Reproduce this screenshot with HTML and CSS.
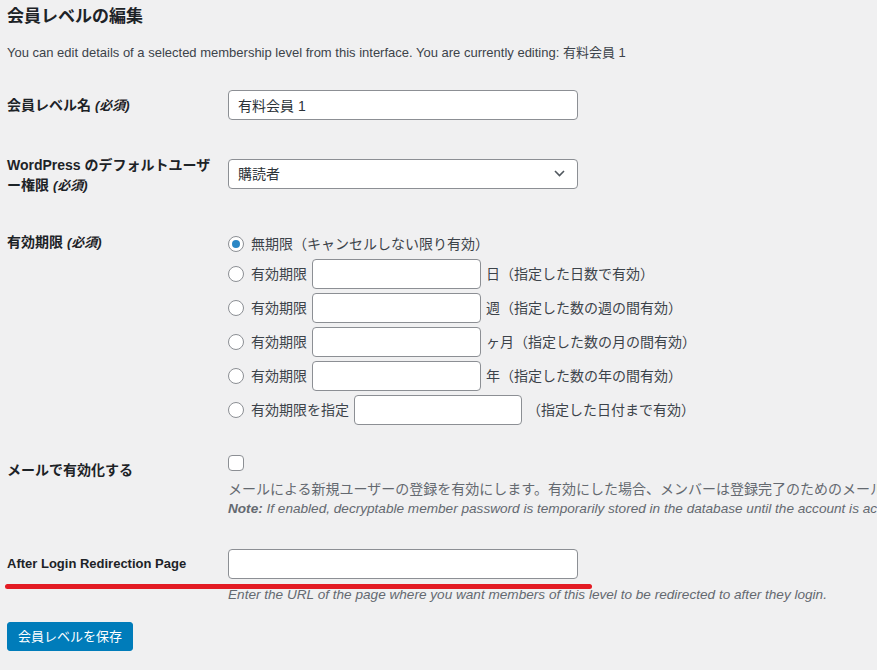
FILE: index.html
```html
<!DOCTYPE html>
<html lang="ja">
<head>
<meta charset="utf-8">
<title>会員レベルの編集</title>
<link rel="stylesheet" href="styles.css">
</head>
<body>
<div class="wrap">
  <h2 class="title">会員レベルの編集</h2>
  <p class="intro">You can edit details of a selected membership level from this interface. You are currently editing: 有料会員 1</p>

  <form class="form">
    <div class="th">会員レベル名 <em>(必須)</em></div>
    <div class="td"><input class="field" type="text" value="有料会員 1"></div>

    <div class="th">WordPress のデフォルトユーザー権限 <em>(必須)</em></div>
    <div class="td">
      <div class="field select">
        <span>購読者</span>
        <svg class="chevron" width="11" height="7" viewBox="0 0 11 7"><polyline points="1,1 5.5,5.5 10,1" fill="none" stroke="#50575e" stroke-width="1.6"/></svg>
      </div>
    </div>

    <div class="th">有効期限 <em>(必須)</em></div>
    <div class="td">
      <div class="choices">
        <div class="choice first"><span class="radio checked"></span>無期限（キャンセルしない限り有効）</div>
        <div class="choice"><span class="radio"></span>有効期限<input class="num" type="text">日（指定した日数で有効）</div>
        <div class="choice"><span class="radio"></span>有効期限<input class="num" type="text">週（指定した数の週の間有効）</div>
        <div class="choice"><span class="radio"></span>有効期限<input class="num" type="text">ヶ月（指定した数の月の間有効）</div>
        <div class="choice"><span class="radio"></span>有効期限<input class="num" type="text">年（指定した数の年の間有効）</div>
        <div class="choice"><span class="radio"></span>有効期限を指定<input class="num date" type="text">（指定した日付まで有効）</div>
      </div>
    </div>

    <div class="th">メールで有効化する</div>
    <div class="td">
      <span class="checkbox"></span>
      <p class="desc">メールによる新規ユーザーの登録を有効にします。有効にした場合、メンバーは登録完了のためのメールアドレスを確認する必要があります。</p>
      <p class="note"><strong>Note:</strong> If enabled, decryptable member password is temporarily stored in the database until the account is activated.</p>
    </div>

    <div class="th th-en">After Login Redirection Page</div>
    <div class="td td-mark">
      <input class="field" type="text">
      <p class="hint">Enter the URL of the page where you want members of this level to be redirected to after they login.</p>
      <span class="mark"></span>
    </div>
  </form>

  <p class="submit"><button class="button" type="button">会員レベルを保存</button></p>
</div>
</body>
</html>
```
FILE: styles.css
```css
* { box-sizing: border-box; }

html, body {
  margin: 0;
  overflow: hidden;
}

body {
  background: #f0f0f1;
  color: #3c434a;
  font-family: "Liberation Sans", "Noto Sans CJK JP", sans-serif;
  font-size: 13px;
  line-height: 1.5;
}

.wrap {
  padding-left: 7px;
}

.title {
  margin: 6px 0 0;
  font-size: 17px;
  line-height: 22px;
  font-weight: 700;
  color: #1d2327;
}

.intro {
  margin: 15px 0 0;
  line-height: 20px;
  white-space: nowrap;
}

.form {
  display: grid;
  grid-template-columns: 221px 1fr;
  margin-top: 12px;
}

.th {
  padding: 20px 16px 16px 0;
  font-size: 14px;
  line-height: 20px;
  font-weight: 700;
  color: #1d2327;
}

.th em {
  font-size: 13px;
  font-style: italic;
}

.th-en {
  font-size: 13px;
}

.td {
  align-self: center;
  padding: 15px 0;
  font-size: 14px;
  line-height: 20px;
  color: #3c434a;
}

.field {
  display: block;
  width: 350px;
  height: 30px;
  margin: 0;
  padding: 0 9px;
  border: 1px solid #8c8f94;
  border-radius: 4px;
  background: #fff;
  font: inherit;
  color: #2c3338;
}

.select {
  display: flex;
  align-items: center;
  justify-content: space-between;
  padding-right: 12px;
}

.choices {
  display: flex;
  flex-direction: column;
  gap: 4px;
}

.choice {
  display: flex;
  align-items: center;
  min-height: 25px;
  white-space: nowrap;
}

.choice.first {
  min-height: 28px;
  padding-top: 5px;
}

.radio {
  flex: none;
  display: grid;
  place-items: center;
  width: 16px;
  height: 16px;
  margin-right: 7px;
  border: 1px solid #8c8f94;
  border-radius: 50%;
  background: #fff;
}

.radio.checked::before {
  content: "";
  width: 8px;
  height: 8px;
  border-radius: 50%;
  background: #2b87c5;
}

.num {
  width: 169px;
  height: 30px;
  margin: 0 5px;
  padding: 0 8px;
  border: 1px solid #8c8f94;
  border-radius: 4px;
  background: #fff;
  font: inherit;
}

.num.date {
  width: 168px;
}

.checkbox {
  display: block;
  width: 16px;
  height: 16px;
  border: 1px solid #8c8f94;
  border-radius: 4px;
  background: #fff;
}

.desc {
  margin: 8px 0 0;
  color: #646970;
  white-space: nowrap;
}

.note {
  margin: 0;
  font-size: 13.6px;
  font-style: italic;
  color: #646970;
  white-space: nowrap;
}

.hint {
  margin: 6px 0 0;
  font-size: 13.6px;
  font-style: italic;
  color: #646970;
  white-space: nowrap;
}

.td-mark {
  position: relative;
}

.mark {
  position: absolute;
  left: -223px;
  top: 50px;
  width: 587px;
  height: 5px;
  border-radius: 3px;
  background: #e31b23;
}

.submit {
  margin: 2px 0 0;
}

.button {
  height: 29px;
  padding: 0 10px;
  border: 1px solid #007cba;
  border-radius: 3px;
  background: #007cba;
  color: #fff;
  font: inherit;
  font-size: 13px;
  line-height: 27px;
}
```
